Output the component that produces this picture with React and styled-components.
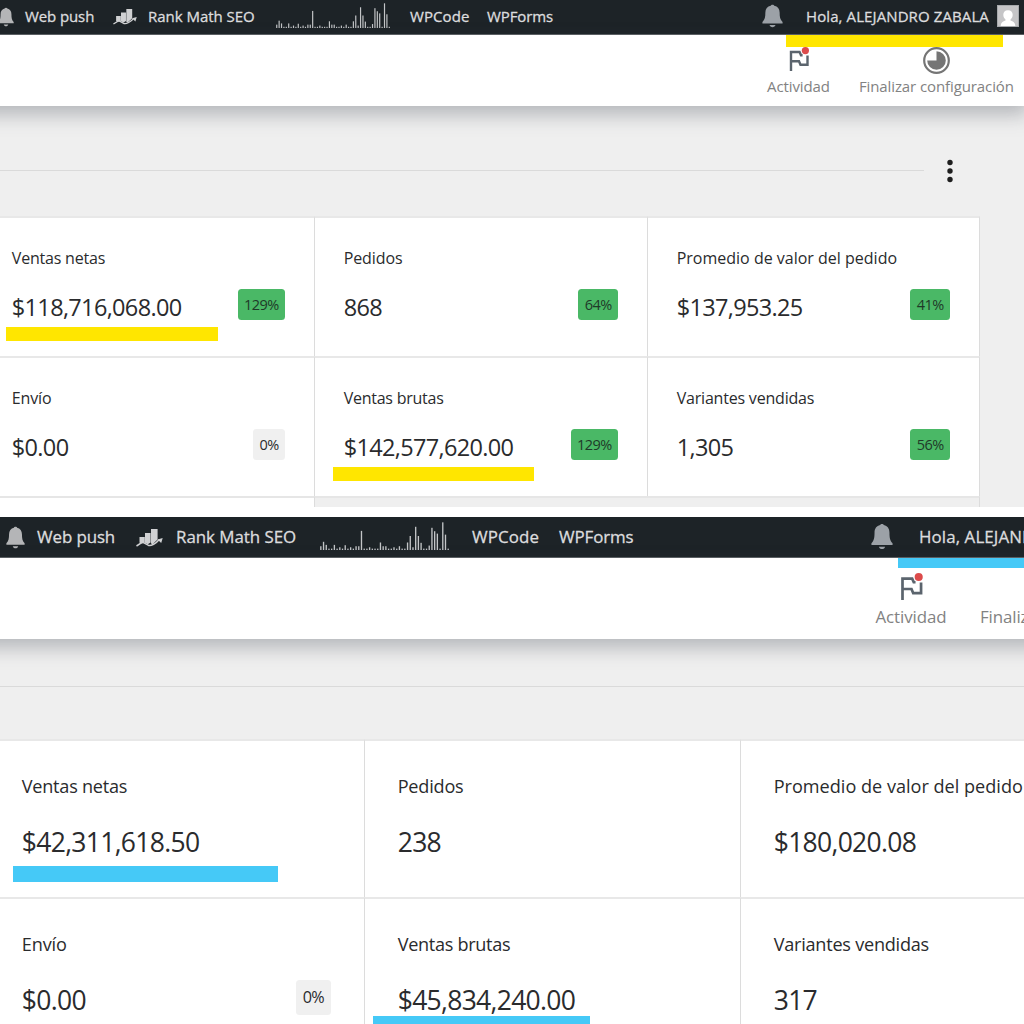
import React from "react";
import styled, { createGlobalStyle, ThemeProvider } from "styled-components";

const GlobalStyle = createGlobalStyle`
  * { box-sizing: border-box; }
  body {
    margin: 0;
    background: #fff;
    font-family: "Open Sans", "Noto Sans", sans-serif;
    overflow: hidden;
  }
`;

const normal = {
    height: 507,
    barHeight: 35,
    barColumns: "25px 88px 35px 127.5px 134.5px 77px 275px 44px 190.5px 1fr",
    barFont: 15,
    barTextLift: 3,
    bellSmall: { w: 16, h: 20, x: -2, y: -0.5 },
    rank: { w: 24, h: 17, y: -0.5 },
    spark: { w: 114, h: 25, y: -1.5 },
    bellLarge: { w: 21, h: 24, x: 0, y: -1 },
    headerHeight: 71,
    headerLeft: 767,
    headerGap: 29,
    headerFont: 15,
    flag: 24,
    sectionHeight: 110,
    sectionRule: 924,
    columns: "333px 333px 332px",
    gridLeft: -18,
    rowHeight: 140,
    cellPad: 29,
    labelTop: 28.4,
    labelFont: 16,
    valueTop: 18.6,
    valueFont: 23.5,
    valueSpacing: -0.66,
    badgeTop: 1,
    badgeFont: 14.5,
    badgeHeight: 31,
    badgePad: 6.5,
    mark: "#ffe600",
};

const zoomed = {
    height: 507,
    barHeight: 41,
    barColumns: "37px 99px 40px 144px 152px 87px 312px 48px 210px 1fr",
    barFont: 16.9,
    barTextLift: 2,
    bellSmall: { w: 19, h: 23, x: 6, y: 0 },
    rank: { w: 27, h: 19, y: 0 },
    spark: { w: 129, h: 28, y: -1 },
    bellLarge: { w: 22, h: 27, x: 0, y: -0.5 },
    headerHeight: 81,
    headerLeft: 875.5,
    headerGap: 33.5,
    headerFont: 16.9,
    flag: 27,
    sectionHeight: 100,
    sectionRule: 1024,
    columns: "377px 376px 376px",
    gridLeft: -12,
    rowHeight: 158,
    cellPad: 33,
    labelTop: 33,
    labelFont: 18.1,
    valueTop: 25.5,
    valueFont: 26.5,
    valueSpacing: -0.7,
    badgeTop: -0.8,
    badgeFont: 16.2,
    badgeHeight: 35,
    badgePad: 7,
    mark: "#45c9f7",
};

const Page = styled.div`
  width: 1024px;
  height: 1024px;
  display: flex;
  flex-direction: column;
  gap: 10px;
  overflow: hidden;
`;

const Panel = styled.section`
  height: ${p => p.theme.height}px;
  overflow: hidden;
  background: #efefef;
`;

const AdminBar = styled.div`
  height: ${p => p.theme.barHeight}px;
  display: grid;
  grid-template-columns: ${p => p.theme.barColumns};
  align-items: center;
  background: #1d2327;
  border-bottom: 1px solid #5d6164;
  color: #dcdcde;
  font-size: ${p => p.theme.barFont}px;
  white-space: nowrap;
  overflow: hidden;
  -webkit-text-stroke: 0.3px #dcdcde;
`;

const BarIcon = styled.span`
  display: flex;
  margin-left: ${p => p.$x || 0}px;
  margin-top: ${p => (p.$y || 0) * 2}px;
`;

const BarText = styled.span`
  padding-bottom: ${p => p.theme.barTextLift}px;
  letter-spacing: ${p => p.$spacing || 0}px;
`;

const Header = styled.div`
  position: relative;
  z-index: 1;
  height: ${p => p.theme.headerHeight}px;
  margin: 0 -${p => (p.theme === zoomed ? 60 : 4)}px 0 -40px;
  padding-left: ${p => p.theme.headerLeft + 40}px;
  display: flex;
  gap: ${p => p.theme.headerGap}px;
  background: #fff;
  box-shadow: 0 9px 18px rgba(80, 86, 98, 0.36);
`;

const HeaderMark = styled.div`
  position: absolute;
  top: 0;
  left: ${p => p.$left + 40}px;
  width: ${p => p.$width}px;
  height: ${p => p.$height}px;
  background: ${p => p.theme.mark};
`;

const Action = styled.div`
  position: relative;
  flex: none;
  height: 100%;
  display: flex;
  flex-direction: column;
  align-items: center;
  justify-content: flex-end;
  padding-bottom: ${p => (p.theme === zoomed ? 10.5 : 7)}px;
  gap: ${p => (p.theme === zoomed ? 2 : 0)}px;
  color: #828282;
  font-size: ${p => p.theme.headerFont}px;
  line-height: 25px;
  letter-spacing: -0.1px;
  white-space: nowrap;
`;

const ActionIcon = styled.span`
  display: flex;
  align-items: center;
  height: 27px;
  margin-left: ${p => p.$shift || 0}px;
  padding-bottom: ${p => p.$lift || 0}px;
`;

const Section = styled.div`
  height: ${p => p.theme.sectionHeight}px;
  display: flex;
  align-items: center;
  padding-top: ${p => (p.theme === zoomed ? 0 : 19)}px;
  padding-bottom: ${p => (p.theme === zoomed ? 5 : 0)}px;
`;

const Rule = styled.div`
  width: ${p => p.theme.sectionRule}px;
  height: 1px;
  background: #dadada;
`;

const Dots = styled.span`
  display: flex;
  margin-left: 22px;
`;

const Grid = styled.div`
  width: max-content;
  margin-left: ${p => p.theme.gridLeft}px;
  display: grid;
  grid-template-columns: ${p => p.theme.columns};
`;

const Cell = styled.div`
  position: relative;
  height: ${p => p.theme.rowHeight}px;
  padding: ${p => p.theme.labelTop}px ${p => p.theme.cellPad}px 0 ${p => p.theme.cellPad - 0.3}px;
  background: #fff;
  border-top: 2px solid #e8e8e8;
  border-right: 1px solid #dcdcdc;
  color: #2a2b2d;

  &:nth-child(3n + 1) {
    padding-left: ${p => p.theme.cellPad + 0.8}px;
  }
`;

const Filler = styled.div`
  height: 11px;
  background: ${p => (p.$white ? "#fff" : "#efefef")};
  border-top: 2px solid #e6e6e6;
  border-right: ${p => (p.$line ? "1px solid #dcdcdc" : "none")};
`;

const Label = styled.div`
  font-size: ${p => p.theme.labelFont}px;
  line-height: 24px;
  letter-spacing: ${p => p.$spacing}px;
  white-space: nowrap;
`;

const ValueRow = styled.div`
  display: flex;
  justify-content: space-between;
  align-items: flex-start;
  margin-top: ${p => p.theme.valueTop - 1}px;
`;

const Value = styled.span`
  padding-top: 3px;
  font-size: ${p => p.theme.valueFont}px;
  line-height: 32px;
  letter-spacing: ${p => p.theme.valueSpacing}px;
`;

const Badge = styled.span`
  height: ${p => p.theme.badgeHeight}px;
  margin-top: ${p => p.theme.badgeTop}px;
  padding: 0 ${p => p.theme.badgePad - 0.2}px 0 ${p => p.theme.badgePad}px;
  border-radius: 3.5px;
  background: ${p => (p.$up ? "#4ab866" : "#f0f0f0")};
  color: ${p => (p.$up ? "#1f3a29" : "#2a2b2d")};
  font-size: ${p => p.theme.badgeFont}px;
  line-height: ${p => p.theme.badgeHeight}px;
  letter-spacing: -0.55px;
`;

const Mark = styled.div`
  position: absolute;
  left: ${p => p.$left}px;
  top: ${p => p.$top}px;
  width: ${p => p.$width}px;
  height: ${p => p.$height}px;
  background: ${p => p.theme.mark};
`;

const BellIcon = ({ size, color }) => (
    <svg width={size.w} height={size.h} viewBox="0 0 20 24" preserveAspectRatio="none" fill={color}>
        <path d="M10 .8c.9 0 1.500.5 1.700 1 3.200.7 5.100 3.200 5.100 6.800 0 4.400.4 7 2.800 9.300v1.600H.4v-1.600c2.400-2.300 2.800-4.900 2.800-9.300 0-3.600 1.900-6.100 5.100-6.800.2-.5.8-1 1.700-1z" />
        <path d="M7.200 21h5.600c-.3 1.400-1.400 2.200-2.800 2.200s-2.500-.8-2.800-2.200z" />
    </svg>
);

const RankIcon = ({ size }) => (
    <svg width={size.w} height={size.h} viewBox="0 0 27 19" fill="#d0d1d3">
        <path d="M3.500 9h5.300v5.500L6 15.500l-2.500-.7z" />
        <path d="M9 5h5.600v9.500l-2.800 1.800-2.800-1.500z" />
        <path d="M15 1h6.600v10.500l-5 4.800-1.600-.7z" />
        <path d="M.5 18l6-3.800 6 3.200c2.600.6 7.500-1.800 10.500-5.600" fill="none" stroke="#d0d1d3" strokeWidth="1.500" />
        <path d="M21.500 11.500l5.200-1.500-1.500 5z" />
    </svg>
);

// visits per hour, 48 hours
const VISITS = [
    11, 24, 15, 4, 4, 15, 4, 8, 4, 14, 4, 8, 4, 11, 11, 56, 4, 4, 8, 4, 4, 4, 22, 11,
    11, 4, 4, 8, 4, 11, 4, 4, 22, 41, 8, 68, 41, 21, 4, 4, 13, 65, 55, 48, 4, 81, 45, 4,
];

const Sparkline = ({ size }) => (
    <svg width={size.w} height={size.h} viewBox="0 0 387 82" preserveAspectRatio="none" fill="#c3c5c7">
        {VISITS.map((v, i) => (
            <rect key={i} x={i * 8.13 + 0.5} y={82 - v} width="4" height={v} />
        ))}
    </svg>
);

const Avatar = () => (
    <svg width="22" height="22" viewBox="0 0 22 22">
        <rect width="22" height="22" fill="#a7aaad" />
        <rect x="1" y="1" width="20" height="20" fill="#c5c5c7" />
        <path d="M11 5.200c3 0 4.700 2 4.700 4.600 0 2-.9 3.700-2.200 4.600v1.200c2.700.7 4.600 2 4.900 5.400H3.600c.3-3.400 2.200-4.700 4.900-5.400v-1.200c-1.300-.9-2.200-2.600-2.200-4.600 0-2.600 1.700-4.600 4.700-4.600z" fill="#fff" />
    </svg>
);

const FlagIcon = ({ size }) => (
    <svg width={size} height={size} viewBox="0 0 24 24">
        <path d="M4 24V5h8.600l1.400 3.200h1.600M4 14.200h8l1.500 3.600h7V8.500" fill="none" stroke="#5b646d" strokeWidth="2.400" />
        <circle cx="18.400" cy="3.600" r="3.600" fill="#dc4b4b" />
    </svg>
);

const ProgressIcon = () => (
    <svg width="27" height="27" viewBox="0 0 27 27">
        <circle cx="13.500" cy="13.500" r="12.300" fill="#fff" stroke="#757575" strokeWidth="2.200" />
        <path d="M13.500 13.500V4.200a9.300 9.300 0 1 1-9.300 9.300z" fill="#757575" />
    </svg>
);

const DotsIcon = () => (
    <svg width="8" height="24" viewBox="0 0 8 24" fill="#1e1e1e">
        <circle cx="4" cy="3.500" r="2.700" />
        <circle cx="4" cy="12" r="2.700" />
        <circle cx="4" cy="20.500" r="2.700" />
    </svg>
);

function Dashboard({ theme, cells, headerMark, showMenu, showFooter }) {
    return (
        <ThemeProvider theme={theme}>
            <Panel>
                <AdminBar>
                    <BarIcon $x={theme.bellSmall.x} $y={theme.bellSmall.y}><BellIcon size={theme.bellSmall} color="#b4b5b7" /></BarIcon>
                    <BarText $spacing={-0.1}>Web push</BarText>
                    <BarIcon $y={theme.rank.y}><RankIcon size={theme.rank} /></BarIcon>
                    <BarText $spacing={-0.03}>Rank Math SEO</BarText>
                    <BarIcon $y={theme.spark.y}><Sparkline size={theme.spark} /></BarIcon>
                    <BarText $spacing={0.1}>WPCode</BarText>
                    <BarText $spacing={-0.1}>WPForms</BarText>
                    <BarIcon $y={theme.bellLarge.y}><BellIcon size={theme.bellLarge} color="#9ca1a7" /></BarIcon>
                    <BarText $spacing={0.1}>Hola, ALEJANDRO ZABALA</BarText>
                    <BarIcon $y={-1}><Avatar /></BarIcon>
                </AdminBar>
                <Header>
                    <HeaderMark $left={headerMark.left} $width={headerMark.width} $height={headerMark.height} />
                    <Action>
                        <ActionIcon $shift={0.5} $lift={4}><FlagIcon size={theme.flag} /></ActionIcon>
                        Actividad
                    </Action>
                    <Action>
                        <ActionIcon><ProgressIcon /></ActionIcon>
                        Finalizar configuración
                    </Action>
                </Header>
                <Section>
                    <Rule />
                    {showMenu && <Dots><DotsIcon /></Dots>}
                </Section>
                <Grid>
                    {cells.map(c => (
                        <Cell key={c.label}>
                            <Label $spacing={c.spacing}>{c.label}</Label>
                            <ValueRow>
                                <Value>{c.value}</Value>
                                {c.change && <Badge $up={c.change !== "0%"}>{c.change}</Badge>}
                            </ValueRow>
                            {c.mark && <Mark $left={c.mark[0]} $top={c.mark[1]} $width={c.mark[2]} $height={c.mark[3]} />}
                        </Cell>
                    ))}
                    {showFooter && (
                        <>
                            <Filler $white $line />
                            <Filler />
                            <Filler $line />
                        </>
                    )}
                </Grid>
            </Panel>
        </ThemeProvider>
    );
}

// mark: left, top, width, height
const CELLS_TOP = [
    { label: "Ventas netas", spacing: -0.2, value: "$118,716,068.00", change: "129%", mark: [24, 109, 212, 14] },
    { label: "Pedidos", spacing: -0.1, value: "868", change: "64%" },
    { label: "Promedio de valor del pedido", spacing: 0, value: "$137,953.25", change: "41%" },
    { label: "Envío", spacing: -0.15, value: "$0.00", change: "0%" },
    { label: "Ventas brutas", spacing: -0.25, value: "$142,577,620.00", change: "129%", mark: [18, 109, 201.4, 14] },
    { label: "Variantes vendidas", spacing: -0.2, value: "1,305", change: "56%" },
];

const CELLS_BOTTOM = [
    { label: "Ventas netas", spacing: -0.24, value: "$42,311,618.50", mark: [25, 125, 264.5, 16] },
    { label: "Pedidos", spacing: -0.2, value: "238" },
    { label: "Promedio de valor del pedido", spacing: 0, value: "$180,020.08" },
    { label: "Envío", spacing: -0.15, value: "$0.00", change: "0%" },
    { label: "Ventas brutas", spacing: -0.3, value: "$45,834,240.00", mark: [8, 117, 217, 16] },
    { label: "Variantes vendidas", spacing: -0.24, value: "317" },
];

export default function App() {
    return (
        <>
            <GlobalStyle />
            <Page>
                <Dashboard
                    theme={normal}
                    cells={CELLS_TOP}
                    headerMark={{ left: 785.5, width: 217.8, height: 12 }}
                    showMenu
                    showFooter
                />
                <Dashboard
                    theme={zoomed}
                    cells={CELLS_BOTTOM}
                    headerMark={{ left: 898, width: 186, height: 10 }}
                />
            </Page>
        </>
    );
}
